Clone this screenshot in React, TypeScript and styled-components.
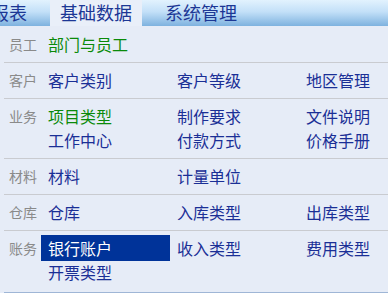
import React from 'react'
import styled, { createGlobalStyle } from 'styled-components'

const GlobalStyle = createGlobalStyle`
	html, body {
		margin: 0;
		padding: 0;
		background: #e6ecf7;
		font-family: "Noto Sans CJK SC", "Liberation Sans", sans-serif;
		overflow: hidden;
	}
`

const Page = styled.div`
	width: 388px;
	height: 293px;
	display: flex;
	flex-direction: column;
	overflow: hidden;
	background: #e6ecf7;
`

const TabBar = styled.div`
	height: 26px;
	flex: none;
	display: flex;
	background: linear-gradient(to bottom, #e2f2fe 0%, #c3e0f8 45%, #7eb2df 100%);
	overflow: hidden;
`

// the tab strip is scrolled a bit, so the first tab is half hidden
const TabList = styled.div`
	display: flex;
	gap: 13px;
	margin-left: -19px;
`

const Tab = styled.div<{ $active?: boolean }>`
	height: 26px;
	padding: 0 10px;
	font-size: 18px;
	line-height: 25px;
	color: #1c3795;
	white-space: nowrap;
	background: ${(p) => (p.$active ? '#e9eff9' : 'transparent')};
`

const Body = styled.div`
	flex: 1;
	padding-top: 1px;
	margin-left: 4px;
	border-bottom: 1px solid #9fb6d6;
	overflow: hidden;
`

const Section = styled.div`
	display: grid;
	grid-template-columns: 37px 129px 129px 129px;
	grid-auto-rows: 24px;
	padding: 5px 0 6px;
	border-bottom: 1px solid #c9cbd0;
	&:last-child {
		border-bottom: none;
	}
`

const Label = styled.div`
	grid-column: 1;
	grid-row: 1;
	padding-left: 5px;
	font-size: 14px;
	line-height: 24px;
	color: #8a8a8a;
	white-space: nowrap;
`

const Link = styled.a<{ $green?: boolean; $active?: boolean; $col: number; $row: number }>`
	grid-column: ${(p) => p.$col};
	grid-row: ${(p) => p.$row};
	display: block;
	padding-left: 7px;
	font-size: 16px;
	line-height: 24px;
	white-space: nowrap;
	cursor: pointer;
	color: ${(p) => (p.$active ? '#ffffff' : p.$green ? '#0a8a0a' : '#1a2f96')};
	background: ${(p) => (p.$active ? '#003399' : 'transparent')};
	${(p) => p.$active && 'margin: -1px 0; padding-top: 1px; padding-bottom: 1px;'}
`

type Item = { text: string; green?: boolean; active?: boolean }

const sections: Array<{ label: string; rows: Item[][] }> = [
	{ label: '员工', rows: [[{ text: '部门与员工', green: true }]] },
	{ label: '客户', rows: [[{ text: '客户类别' }, { text: '客户等级' }, { text: '地区管理' }]] },
	{
		label: '业务',
		rows: [
			[{ text: '项目类型', green: true }, { text: '制作要求' }, { text: '文件说明' }],
			[{ text: '工作中心' }, { text: '付款方式' }, { text: '价格手册' }],
		],
	},
	{ label: '材料', rows: [[{ text: '材料' }, { text: '计量单位' }]] },
	{ label: '仓库', rows: [[{ text: '仓库' }, { text: '入库类型' }, { text: '出库类型' }]] },
	{
		label: '账务',
		rows: [
			[{ text: '银行账户', active: true }, { text: '收入类型' }, { text: '费用类型' }],
			[{ text: '开票类型' }],
		],
	},
]

export default function App() {
	return (
		<>
			<GlobalStyle />
			<Page>
				<TabBar>
					<TabList>
						<Tab>报表</Tab>
						<Tab $active>基础数据</Tab>
						<Tab>系统管理</Tab>
					</TabList>
				</TabBar>
				<Body>
					{sections.map((section) => (
						<Section key={section.label}>
							<Label>{section.label}</Label>
							{section.rows.map((row, r) =>
								row.map((item, c) => (
									<Link
										key={`${r}-${c}`}
										$col={c + 2}
										$row={r + 1}
										$green={item.green}
										$active={item.active}
									>
										{item.text}
									</Link>
								)),
							)}
						</Section>
					))}
				</Body>
			</Page>
		</>
	)
}
